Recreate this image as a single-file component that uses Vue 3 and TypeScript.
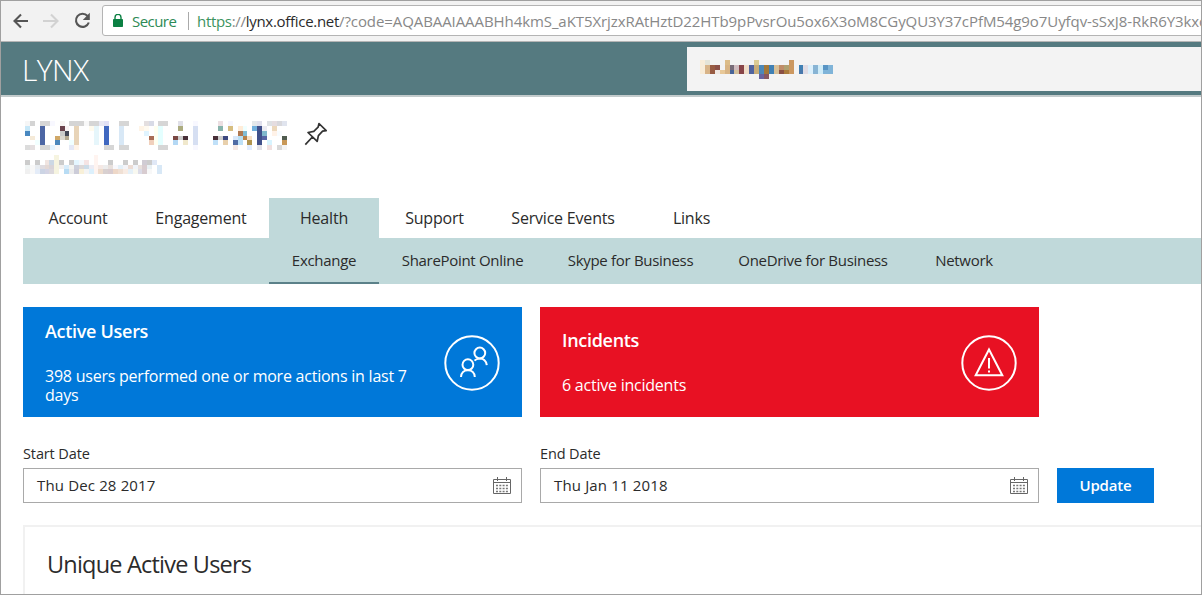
<script setup lang="ts">
type Cell = { x: number; y: number; color: string }

// Each row is a list of "column:hex" or "first-last:hex" entries.
function cells(rows: string[]): Cell[] {
  return rows.flatMap((row, y) =>
    row.split(' ').filter(Boolean).flatMap((entry) => {
      const [range, color] = entry.split(':')
      const [first, last] = range.split('-').map(Number)
      const out: Cell[] = []
      for (let x = first; x <= (last ?? first); x++) out.push({ x, y, color: '#' + color })
      return out
    }),
  )
}

const stems = '3:4c66a4 10:e8d4b8 14:e6f6fb 16:4068c0 19:d8e8f6 26:fffff0 27:e4ffff 34:d6dff2 47:40508a '
const tenant = cells([
  '0:f6f6f6 1:d4d4d4 3-4:d6d6d6 5:f8f8ff 7:f8f5f3 9-11:d5d5d5 12:f8f8f8 13-14:d6d6d6 15:e8e8f4 16:e0e0f5 19-20:d6d6d6 24:e4dfe0 25:d8dbe6 27-28:d6d6d6 31:e0e0e8 34:f8f8ff 39:ecdfe2 41:f6f6ff 46:e4e8ea 47:e0e0ec 49:dee1e4 50:e5dde0 51:d8d8dc 52:e0e4ee',
  stems + '0:c8e8f8 7:6a424c 8:fbf4f4 13:fffbee 23:fff4e6 24:fffaf0 31:acac80 39:88b4ac 41:d6bd80 43:ffecd8 44:f0ffff 46:72b0dc 48:ececf2 50:ecd8bc',
  stems + '0:4888c0 7:cccccc 8:444858 24:e0f4ff 43:b07850 44:80bcd4 48:80b8cc 50:fff2e8 51:f8fcff',
  stems + '1:f5ead8 6:d0a868 7:dcd8d0 8:b4a890 25:a86c54 30:7a4844 31:cccccc 32:483038 38:483038 39:cccccc 40:3c4880 42:d8e8fa 43:b8e0f4 44:b88048 45:f8e0c4 48:5864a4 52:505c50',
  stems + '2:f2ffff 6:4c88bc 9:f0ffff 25:f0d0bc 30:b4d8f4 32:f0e8cc 38:c0e0f8 40:e8d0ac 42:506ca4 43:bce0f8 45:b09450 49:d8f4ff 52:c89858',
  '0:dcdcdc 1:e4dfe0 3-4:d6d6d6 5:e4f4ff 6:f8f8f8 9:e4e8f6 10:fff4e8 16-17:d6d6d6 19-20:d6d6d6 27-28:d6d6d6 34:f8f8ff 42:f4e8e4 45:e0ecff 47:e0e0e8 49:f0e0e0 51:d8d8d8 52:f4f4f4',
])
const domain = cells([
  '6:f6f4e0 14:fff4f0',
  '0:cccccc 2:cccccc 4:f0e4e0 5:ccd8e4 6:f6f4e0 7:cccccc 9:cccccc 10:e4f6ff 11:f4f8fc 12:f5e4e4 14:fff4f0 17:cccccc 20:cccccc 22:cccccc 24:d0ccd4 25:cccccc 26:e0e8f6',
  '0:f0f4f4 1:f8f8f8 2:e8ecf0 3:e0dce0 4:e4d8d4 5:d8d4d8 6:f6f4e0 7:f0f0f0 8:d8ecfa 9:f4f4f0 10:ccd0dc 11:dcd8d8 12:ccdce8 13:ececf4 14:fff4f0 15:f4e8e4 16:ececec 17:e8e0dc 18:f8f8fc 19:e4f0f8 20:f4f4f8 21:ecdcd4 22:f0f4fa 23:e8e0dc 24:d8ccd0 25:e8f0f4 27:d8e8f6',
  '0:f0f0f0 1:f8f8f8 2:e4ecf8 3:ccd4e4 4:d4d4e4 5:dcd8dc 6:f6f4e0 7:ffffff 8:b8dcf4 9:ececec 10:ccccd8 11:f8f0d8 12:f4f4f4 13:dcf0fc 14:fff4f0 15:eedccc 16:d8d0d0 17:d8ccd0 18:eed8c8 19:f0e0d4 20:f8ece4 21:e4f0f8 22:f8f8f0 23:dcdce8 24:d8ccd0 25:f8f8f8 27:d8e8f6',
])
const account = cells([
  '0:f8ecd8 1:e4e4d8 5:dcbc88 11:dccc94 18:cc9860',
  '0:f8ecd8 1:d8b488 2:985c44 3:8c5048 5:d8b484 6:786c78 7:d0bcc0 8:884448 9:f0dcc8 10:5064a0 11:c8ac78 12:4c88b8 13:a47838 14:4080b4 15:d8c098 16:c08c68 17:b0a070 18:cc9860 20:4080b4 21:e0dce4 22:dcf0fc 23:88b4d4 24:d0ecf8 25:5894c4 26:80b4d8',
  '0:f8ecd8 1:d8b488 2:985c44 3:f0e8e4 4:e8c898 5:d8b484 6:486498 7:d4c09c 8:884448 9:f0dcc8 10:5064a0 11:c8ac78 12:4c88b8 13:a47838 14:4080b4 15:d8c098 16:8c5044 17:ac7c3c 18:cc9860 20:4878ac 21:e0dce4 22:dcf0fc 23:88b4d4 24:d0ecf8 25-26:80b4d8',
  '1-2:f2f4f6 5-8:f5f4f4 12:6864a0 13:885860 15-17:f6f4f2 22:f7f3f0 25-26:f7f3ee',
])

const tabs = [
  { id: 'account', label: 'Account' },
  { id: 'engagement', label: 'Engagement' },
  { id: 'health', label: 'Health' },
  { id: 'support', label: 'Support' },
  { id: 'events', label: 'Service Events' },
  { id: 'links', label: 'Links' },
]
const subtabs = [
  { id: 'exchange', label: 'Exchange' },
  { id: 'sharepoint', label: 'SharePoint Online' },
  { id: 'skype', label: 'Skype for Business' },
  { id: 'onedrive', label: 'OneDrive for Business' },
  { id: 'network', label: 'Network' },
]
const dates = [
  { label: 'Start Date', value: 'Thu Dec 28 2017' },
  { label: 'End Date', value: 'Thu Jan 11 2018' },
]
</script>

<template>
  <div class="window">
    <div class="toolbar">
      <svg class="nav back" width="16" height="16" viewBox="0 0 16 16"><path d="M15 8H2M8 1.5 1.5 8 8 14.5" /></svg>
      <svg class="nav forward" width="16" height="16" viewBox="0 0 16 16"><path d="M0 8h13.5M8 1.5 14.5 8 8 14.5" /></svg>
      <svg class="nav reload" width="17" height="17" viewBox="0 0 17 17">
        <path d="M13.6 4A6.6 6.6 0 1 0 14.8 10.5" /><path class="solid" d="M15.8 0.8v7.2H8.8z" />
      </svg>
      <div class="address">
        <svg class="lock" width="10" height="13" viewBox="0 0 10 13">
          <path d="M2 6V3.4a3 3 0 0 1 6 0V6" fill="none" stroke="#0b8043" stroke-width="1.4" /><rect y="5" width="10" height="8" rx="0.8" fill="#0b8043" />
        </svg>
        <span class="secure">Secure</span>
        <span class="separator"></span>
        <span class="url"><span class="scheme">https</span><span class="slashes">://</span><span class="host">lynx.office.net</span><span class="code">/?code=AQABAAIAAABHh4kmS_aKT5XrjzxRAtHztD22HTb9pPvsrOu5ox6X3oM8CGyQU3Y37cPfM54g9o7Uyfqv-sSxJ8-RkR6Y3kxc</span></span>
      </div>
    </div>

    <header class="banner">
      <span class="brand">LYNX</span>
      <div class="search">
        <svg width="133" height="19" viewBox="0 0 27 4" preserveAspectRatio="none" shape-rendering="crispEdges">
          <rect v-for="c in account" :key="c.x + '-' + c.y" :x="c.x" :y="c.y" width="1" height="1" :fill="c.color" />
        </svg>
      </div>
    </header>

    <main>
      <div class="heading">
        <div class="names">
          <svg width="262" height="29" viewBox="0 0 53 6" preserveAspectRatio="none" shape-rendering="crispEdges">
            <rect v-for="c in tenant" :key="c.x + '-' + c.y" :x="c.x" :y="c.y" width="1" height="1" :fill="c.color" />
          </svg>
          <svg class="domain" width="137" height="19" viewBox="0 0 28 4" preserveAspectRatio="none" shape-rendering="crispEdges">
            <rect v-for="c in domain" :key="c.x + '-' + c.y" :x="c.x" :y="c.y" width="1" height="1" :fill="c.color" />
          </svg>
        </div>
        <svg class="pin" width="24" height="24" viewBox="0 0 24 24">
          <path d="M15 1.5 22.2 8.6 18.6 9.2 14.4 13.6 13.2 19.4 4 10.5 9.8 9.3 14.1 5.2ZM8.4 15 1.3 22.6" />
        </svg>
      </div>

      <nav class="tabs">
        <a v-for="t in tabs" :key="t.id" :class="['tab', t.id]"><span>{{ t.label }}</span></a>
      </nav>
      <nav class="subtabs">
        <a v-for="t in subtabs" :key="t.id" :class="['subtab', t.id]"><span>{{ t.label }}</span></a>
      </nav>

      <section class="cards">
        <article class="card users">
          <div class="copy">
            <h2>Active Users</h2>
            <p><span>398 users performed one or more actions in last 7</span><span>days</span></p>
          </div>
          <svg width="56" height="56" viewBox="0 0 56 56">
            <circle cx="28" cy="28" r="26.7" />
            <circle cx="35.8" cy="18" r="5.4" /><path d="M30.5 25.7C32.8 23.1 38 22.9 40.5 25.3Q42.4 27 42.8 30.2" />
            <circle cx="23.9" cy="29.7" r="5.4" /><path d="M17 42C17.2 37.8 20 35.3 23.9 35.3S30.6 37.8 30.8 42" />
          </svg>
        </article>
        <article class="card incidents">
          <div class="copy">
            <h2>Incidents</h2>
            <p><span>6 active incidents</span></p>
          </div>
          <svg width="56" height="56" viewBox="0 0 56 56">
            <circle cx="28" cy="28" r="26.7" />
            <path d="M28 14.5 41.3 40.2H14.7Z" /><path d="M28 23v10.5M28 35.5v2" />
          </svg>
        </article>
      </section>

      <form class="filters" @submit.prevent>
        <div v-for="d in dates" :key="d.label" class="field">
          <label>{{ d.label }}</label>
          <div class="input">
            <span>{{ d.value }}</span>
            <svg width="18" height="17" viewBox="0 0 18 17">
              <path d="M.5 2.5h17v14H.5zM.5 5.5h17M4.5 0v4M13.5 0v4" fill="none" stroke="#666" />
              <path d="M3 8.5h12M3 11.5h12M3 14.5h12" fill="none" stroke="#777" stroke-width="1.4" stroke-dasharray="2 1.3" />
            </svg>
          </div>
        </div>
        <button type="submit">Update</button>
      </form>

      <section class="panel"><h1>Unique Active Users</h1></section>
    </main>
  </div>
</template>

<style>
body { margin: 0; background: #fff; }
</style>

<style scoped>
* { box-sizing: border-box; }
.window { width: 1202px; height: 595px; border: 1px solid #a0a0a0; overflow: hidden; background: #fff; color: #2b2b2b; font-family: "Open Sans", "Noto Sans", sans-serif; font-size: 16px; white-space: nowrap; }
svg { display: block; flex: none; }
h1, h2, p { margin: 0; }

.toolbar { display: flex; align-items: center; height: 41px; padding: 0 0 1px 12px; background: #f2f2f2; border-bottom: 1px solid #b5b5b5; }
.nav { fill: none; stroke: #555; stroke-width: 2.1; }
.forward { margin-left: 14px; stroke: #d2d2d2; }
.reload { margin-left: 15px; }
.reload .solid { fill: #555; stroke: none; }
.address { display: flex; align-items: center; width: 1110px; height: 31px; flex: none; margin-left: 11px; padding-left: 10px; background: #fff; border: 1px solid #b4b4b4; border-radius: 3px; font-size: 15px; }
.secure { width: 46px; margin-left: 9px; color: #2c8a55; letter-spacing: -0.55px; }
.separator { width: 1px; height: 18px; margin: 0 8px 0 10px; background: #aaa; }
.url { color: #888; }
.scheme { color: #3b9360; }
.host { color: #2b2b2b; letter-spacing: -0.3px; }
.scheme, .slashes { letter-spacing: -0.3px; }
.code { letter-spacing: -0.08px; }

.banner { display: flex; align-items: center; height: 55px; background: #557a80; border-bottom: 2px solid #c3cbcc; }
.brand { width: 665px; padding-top: 1px; margin-left: 21px; color: #fff; font-size: 30px; font-weight: 300; letter-spacing: -0.6px; }
.search { flex: 1; height: 44px; padding: 13px 0 0 13px; background: #f3f3f3; }

main { padding-left: 22px; }
.heading { display: flex; height: 101px; padding: 24px 0 0 2px; }
.domain { margin-top: 5px; }
.pin { margin: 1px 0 0 17px; fill: none; stroke: #333; stroke-width: 1.7; stroke-linejoin: round; }

.tabs { display: flex; height: 40px; }
.tab { display: flex; align-items: center; justify-content: center; letter-spacing: -0.2px; }
.tab.account { width: 110px; }
.tab.engagement { width: 136px; }
.tab.health { width: 110px; background: #c0d9da; }
.tab.support { width: 111px; }
.tab.events { width: 146px; }
.tab.links { width: 111px; }
.subtabs { display: flex; height: 46px; padding-left: 246px; background: #c0d9da; }
.subtab { display: flex; align-items: center; justify-content: center; font-size: 15px; letter-spacing: -0.3px; border-bottom: 2px solid transparent; }
.exchange { width: 110px; border-color: #5b8189; }
.sharepoint { width: 167px; }
.skype { width: 169px; }
.onedrive { width: 196px; }
.network { width: 106px; }

.cards { display: flex; gap: 18px; margin-top: 23px; }
.card { display: flex; align-items: center; justify-content: space-between; width: 499px; height: 110px; padding: 0 22px; color: #fff; }
.card svg { margin-top: 1px; fill: none; stroke: #fff; stroke-width: 2; }
.card h2 { margin-top: -1px; font-size: 18px; line-height: 24px; font-weight: 600; letter-spacing: -0.3px; }
.card p { margin-top: 24px; font-size: 16px; line-height: 19px; letter-spacing: -0.23px; }
.card p span { display: block; }
.users { background: #0078d9; }
.incidents { background: #e81123; }

.filters { display: flex; align-items: flex-end; gap: 18px; margin-top: 26px; }
.field { width: 499px; }
.field label { display: block; height: 25px; font-size: 14.5px; line-height: 22px; letter-spacing: -0.12px; }
.input { display: flex; align-items: center; justify-content: space-between; height: 35px; padding: 0 10px 1px 13px; border: 1px solid #a9a9a9; font-size: 15px; letter-spacing: 0.15px; }
.input svg { margin-top: 1px; }
.filters button { width: 97px; height: 35px; padding: 0 0 1px; border: 0; background: #0078d9; color: #fff; font: 600 15px "Open Sans", sans-serif; letter-spacing: -0.15px; }
.panel { height: 90px; margin-top: 22px; padding: 19px 0 0 22px; border: 2px solid #f1f1f1; border-width: 2px 0 0 2px; }
.panel h1 { font-size: 23.5px; line-height: 36px; font-weight: 400; letter-spacing: -0.8px; }
</style>
